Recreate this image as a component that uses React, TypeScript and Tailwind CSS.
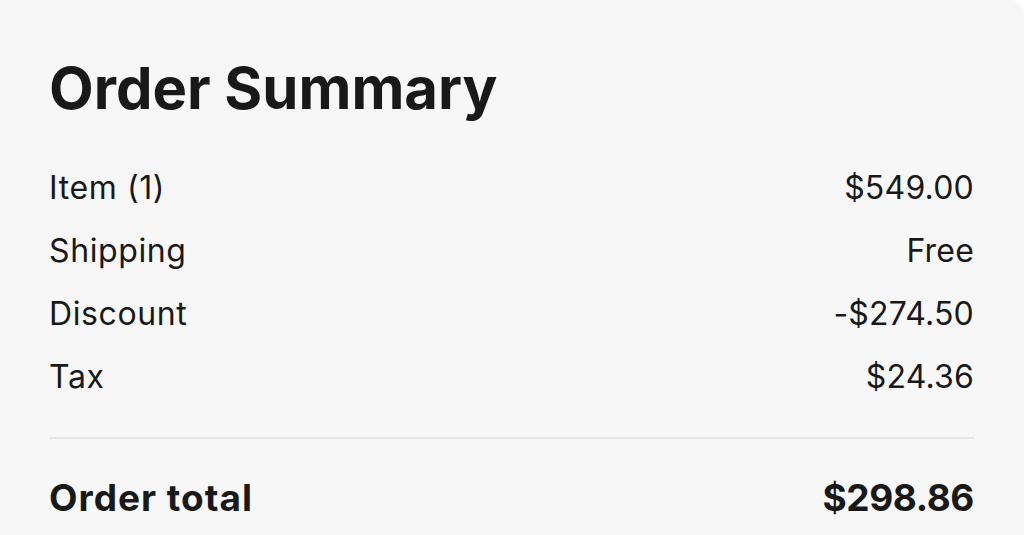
export default function App() {
  const rows = [
    ["Item (1)", "$549.00"],
    ["Shipping", "Free"],
    ["Discount", "-$274.50"],
    ["Tax", "$24.36"],
  ];
  return (
    <div className="w-[1024px] h-[535px] overflow-hidden bg-white" style={{ fontFamily: "Inter, 'Noto Sans', sans-serif" }}>
      <div className="h-full bg-[#f7f7f7] rounded-tr-[14px] pl-[49px] pr-[50px] pt-[56px] text-[#191919]">
        <h1 className="text-[58px] leading-[64px] font-bold">Order Summary</h1>
        <div className="mt-[50px] flex flex-col">
          {rows.map(([l, v]) => (
            <div key={l} className="flex justify-between h-[63px] items-start text-[32px] leading-[36px]">
              <span className="tracking-[0.6px]">{l}</span>
              <span className="tracking-[0.2px]">{v}</span>
            </div>
          ))}
        </div>
        <div className="border-t-2 border-[#e5e5e5] mt-[15px]" />
        <div className="flex justify-between mt-[37px] text-[37px] leading-[44px] font-bold">
          <span className="tracking-[1px]">Order total</span>
          <span className="tracking-[-0.4px]">$298.86</span>
        </div>
      </div>
    </div>
  );
}
